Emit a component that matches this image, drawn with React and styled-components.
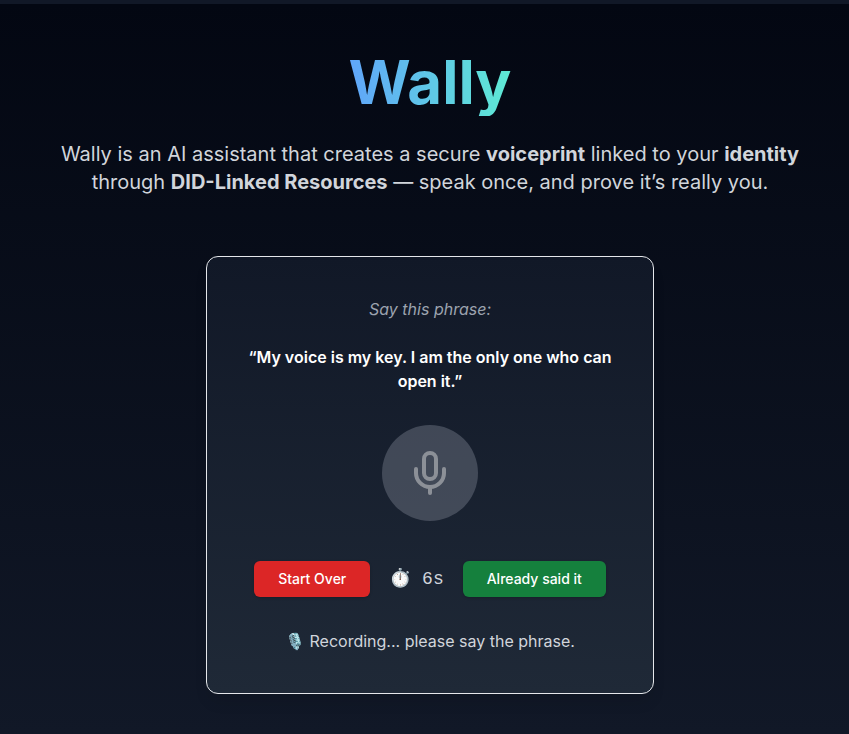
import React from "react";
import styled, { createGlobalStyle } from "styled-components";

const GlobalStyle = createGlobalStyle`
  *, *::before, *::after { box-sizing: border-box; }
  body {
    margin: 0;
    background: #030712;
    color: #ffffff;
    font-family: Inter, "Noto Sans", sans-serif;
    font-size: 16px;
    line-height: 24px;
  }
  h1, p { margin: 0; }
`;

const Page = styled.main`
  min-height: 100vh;
  border-top: 4px solid #111827;
  padding: 48px 24px 40px 35px;
  display: flex;
  flex-direction: column;
  align-items: center;
  background: linear-gradient(to bottom, #030712, #111827);
`;

const Title = styled.h1`
  font-size: 60px;
  line-height: 60px;
  font-weight: 700;
  padding-bottom: 4px;
  color: transparent;
  background: linear-gradient(to right, #60a5fa, #5eead4);
  background-clip: text;
`;

const Intro = styled.p`
  max-width: 768px;
  margin-top: 24px;
  font-size: 20px;
  line-height: 28px;
  text-align: center;
  color: #d1d5db;
`;

const Card = styled.section`
  width: 100%;
  max-width: 448px;
  margin-top: 60px;
  padding: 40px;
  display: flex;
  flex-direction: column;
  align-items: center;
  text-align: center;
  border: 1px solid #e5e7eb;
  border-radius: 12px;
  background: linear-gradient(to bottom, #111827, #1f2937);
  box-shadow: 0 10px 15px -3px rgba(0, 0, 0, 0.1);
`;

const Prompt = styled.p`
  color: #9ca3af;
  font-style: italic;
`;

const Phrase = styled.p`
  margin-top: 24px;
  font-weight: 600;
`;

const MicButton = styled.button`
  width: 96px;
  height: 96px;
  margin-top: 32px;
  padding: 0;
  display: flex;
  align-items: center;
  justify-content: center;
  border: 0;
  border-radius: 50%;
  color: #ffffff;
  background: #6b7280;
  opacity: 0.5;
`;

const Controls = styled.div`
  margin-top: 40px;
  display: flex;
  align-items: center;
  gap: 19px;
`;

const ActionButton = styled.button`
  height: 36px;
  padding: 0 24px;
  border: 0;
  border-radius: 6px;
  color: #ffffff;
  background: ${({ $tone }) => ($tone === "danger" ? "#dc2626" : "#15803d")};
  font: 500 14px/20px Inter, sans-serif;
  box-shadow: 0 1px 3px rgba(0, 0, 0, 0.2);
`;

const Timer = styled.span`
  font-family: "Liberation Mono", monospace;
  font-size: 18px;
  color: #d1d5db;
  white-space: pre;
`;

const Status = styled.p`
  margin-top: 32px;
  color: #d1d5db;
`;

function MicIcon() {
  return (
    <svg width="48" height="48" viewBox="0 0 24 24" fill="none" stroke="currentColor" strokeWidth="2" strokeLinecap="round" strokeLinejoin="round" aria-hidden="true">
      <path d="M12 2a3 3 0 0 0-3 3v7a3 3 0 0 0 6 0V5a3 3 0 0 0-3-3Z" />
      <path d="M19 10v2a7 7 0 0 1-14 0v-2" />
      <path d="M12 19v3" />
    </svg>
  );
}

export default function App() {
  return (
    <>
      <GlobalStyle />
      <Page>
        <Title>Wally</Title>
        <Intro>
          Wally is an AI assistant that creates a secure <strong>voiceprint</strong> linked to your{" "}
          <strong>identity</strong> through <strong>DID-Linked Resources</strong> — speak once, and prove it’s really you.
        </Intro>
        <Card>
          <Prompt>Say this phrase:</Prompt>
          <Phrase>“My voice is my key. I am the only one who can open it.”</Phrase>
          <MicButton type="button" aria-label="Record" disabled>
            <MicIcon />
          </MicButton>
          <Controls>
            <ActionButton type="button" $tone="danger">Start Over</ActionButton>
            <Timer>⏱️ 6s</Timer>
            <ActionButton type="button">Already said it</ActionButton>
          </Controls>
          <Status>🎙️ Recording... please say the phrase.</Status>
        </Card>
      </Page>
    </>
  );
}
